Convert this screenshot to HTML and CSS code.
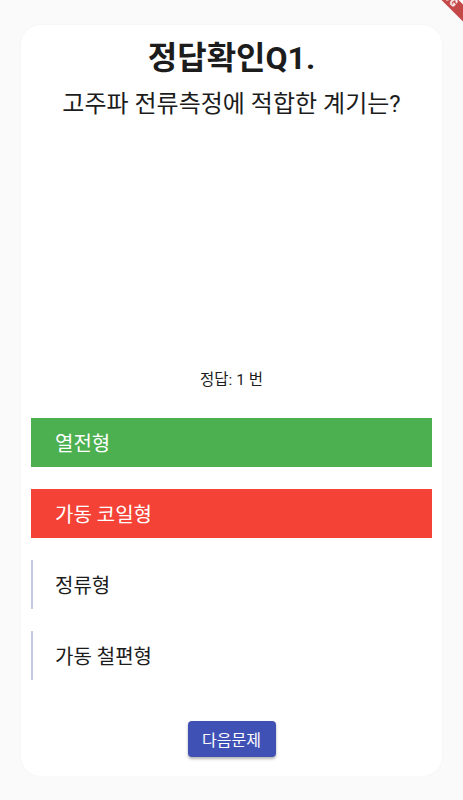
FILE: index.html
```html
<!DOCTYPE html>
<html lang="ko">
<head>
    <meta charset="UTF-8">
    <meta name="viewport" content="width=device-width, initial-scale=1.0">
    <title>정답확인</title>
    <link rel="stylesheet" href="styles.css">
</head>
<body>
    <div class="card">
        <h1 class="title">정답확인Q1.</h1>
        <p class="question">고주파 전류측정에 적합한 계기는?</p>
        <div class="image-box"></div>
        <p class="answer">정답: 1 번</p>
        <div class="options">
            <div class="option correct">열전형</div>
            <div class="option wrong">가동 코일형</div>
            <div class="option">정류형</div>
            <div class="option">가동 철편형</div>
        </div>
        <div class="next-row">
            <button class="next-btn">다음문제</button>
        </div>
    </div>
    <div class="debug-banner">DEBUG</div>
</body>
</html>
```

FILE: styles.css
```css
html, body {
    overflow: hidden;
}
body {
    font-family: Roboto, "Noto Sans CJK KR", sans-serif;
    margin: 0;
    background-color: #fafafa;
    color: #1c1c1c;
}
.card {
    margin: 25px 21px 0 21px;
    padding: 12px 10px 19px 10px;
    background: #ffffff;
    border-radius: 20px;
    box-shadow: 0 0 3px rgba(0, 0, 0, 0.04);
}
.title {
    margin: 0;
    font-size: 32px;
    line-height: 42px;
    font-weight: 700;
    text-align: center;
}
.question {
    margin: 9px 0 0 0;
    font-size: 24px;
    line-height: 32px;
    text-align: center;
}
.image-box {
    height: 250px;
}
.answer {
    margin: 0;
    font-size: 15.5px;
    line-height: 20px;
    text-align: center;
}
.options {
    margin-top: 28px;
    display: flex;
    flex-direction: column;
    gap: 22px;
}
.option {
    height: 49px;
    display: flex;
    align-items: center;
    padding-left: 22px;
    border-left: 2px solid #c5cae9;
    font-size: 20px;
}
.option.correct {
    background-color: #4caf50;
    border-left-color: #4caf50;
    color: #ffffff;
}
.option.wrong {
    background-color: #f44336;
    border-left-color: #f44336;
    color: #ffffff;
}
.next-row {
    margin-top: 41px;
    display: flex;
    justify-content: center;
}
.next-btn {
    width: 88px;
    height: 36px;
    border: none;
    border-radius: 4px;
    background-color: #3f51b5;
    color: #ffffff;
    font-family: Roboto, "Noto Sans CJK KR", sans-serif;
    font-size: 16px;
    box-shadow: 0 2px 3px rgba(0, 0, 0, 0.3);
    cursor: pointer;
}
.debug-banner {
    position: fixed;
    left: 383px;
    top: -13.5px;
    width: 120px;
    height: 12px;
    line-height: 12px;
    transform: rotate(45deg);
    background-color: rgba(183, 28, 28, 0.8);
    color: #ffffff;
    font-size: 10px;
    font-weight: 900;
    text-align: center;
    letter-spacing: 1px;
}
```
